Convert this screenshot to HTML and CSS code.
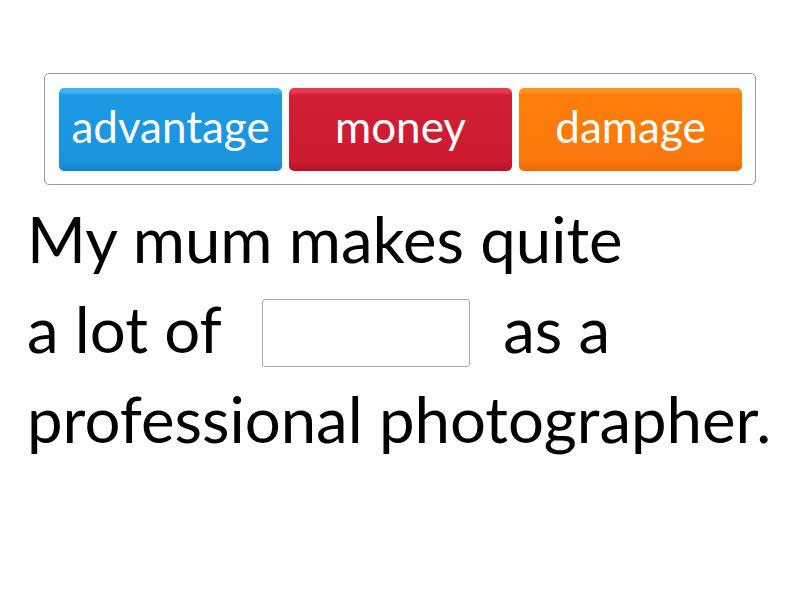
FILE: index.html
```html
<!DOCTYPE html>
<html>
<head>
<meta charset="utf-8">
<link rel="stylesheet" href="styles.css">
</head>
<body>
<div class="page">
  <div class="bank">
    <div class="tile blue">advantage</div>
    <div class="tile red">money</div>
    <div class="tile orange">damage</div>
  </div>
  <div class="sentence">
    <div class="line">My mum makes quite</div>
    <div class="line">a lot of <span class="blank"></span> as a</div>
    <div class="line">professional photographer.</div>
  </div>
</div>
</body>
</html>
```
FILE: styles.css
```css
html, body {
  margin: 0;
  padding: 0;
  background: #fff;
}
body {
  font-family: Lato, "Open Sans", sans-serif;
  width: 800px;
  height: 600px;
  overflow: hidden;
}
.page {
  padding: 73px 0 0 27px;
}
.bank {
  margin-left: 17px;
  width: 712px;
  height: 112px;
  border: 1px solid #999;
  border-radius: 5px;
  box-sizing: border-box;
  display: flex;
  gap: 7px;
  padding: 14px 0 0 14px;
}
.tile {
  width: 223px;
  height: 83px;
  border-radius: 5px;
  color: #fff;
  font-size: 44px;
  display: flex;
  align-items: center;
  justify-content: center;
  box-sizing: border-box;
  padding-bottom: 8px;
}
.blue {
  background: linear-gradient(#3bb3f5 0, #3bb3f5 4px, #1d99e3 7px, #1b94de 88%, #1784c9 100%);
}
.red {
  background: linear-gradient(#e83a50 0, #e83a50 4px, #d21f36 7px, #cc1a31 88%, #b5122a 100%);
}
.orange {
  background: linear-gradient(#ff931f 0, #ff931f 4px, #ff7e0c 7px, #fb770a 88%, #e86a05 100%);
}
.sentence {
  margin-top: 9px;
  font-size: 63.5px;
  color: #000;
  line-height: 90px;
}
.line {
  white-space: nowrap;
}
.blank {
  display: inline-block;
  width: 208px;
  height: 68px;
  border: 1px solid #a9a9a9;
  border-radius: 3px;
  box-sizing: border-box;
  vertical-align: -14px;
  margin: 0 17px 0 25px;
}
```
